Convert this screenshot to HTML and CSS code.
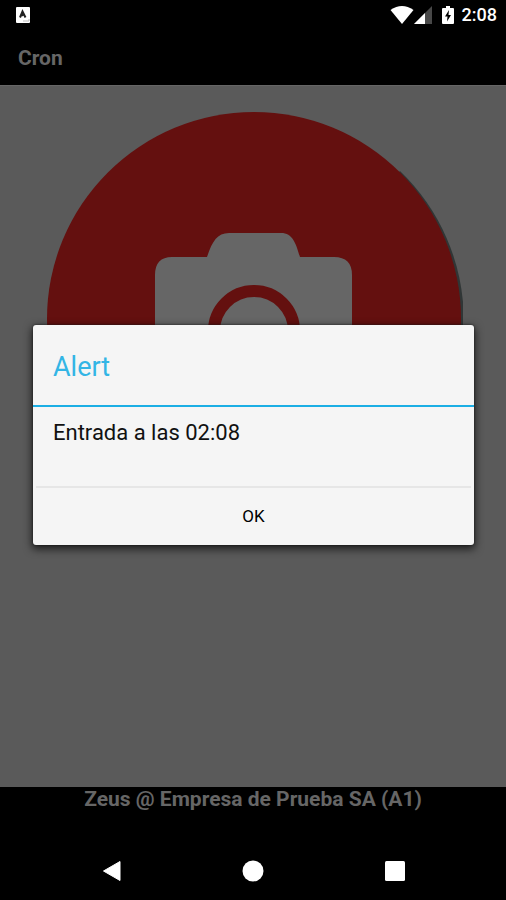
FILE: index.html
```html
<!DOCTYPE html>
<html lang="es">
<head>
<meta charset="utf-8">
<meta name="viewport" content="width=device-width, initial-scale=1">
<title>Cron</title>
<link rel="stylesheet" href="styles.css">
</head>
<body>
<div class="screen">
  <div class="status">
    <svg class="status-app" width="14" height="16" viewBox="0 0 14 16" aria-hidden="true">
      <rect width="14" height="16" rx="1" fill="#fff"/>
      <path d="M4 10.500L6.500 4.500L9.500 10.500M5.500 8.500L7.500 7.500" fill="none" stroke="#222" stroke-width="2"/>
      <path d="M7 14h6v-2" fill="none" stroke="#bbb"/>
    </svg>
    <div class="status-icons">
      <svg width="24" height="20" viewBox="0 0 24 20" aria-hidden="true">
        <path d="M0.500 5Q12 -3 23.500 5L12 19Z" fill="#fff"/>
      </svg>
      <svg width="18" height="20" viewBox="0 0 18 20" aria-hidden="true">
        <path d="M0 19L18 1V19Z" fill="#484848"/>
        <path d="M0 19L11 8V19Z" fill="#fff"/>
      </svg>
      <svg class="battery" width="12" height="20" viewBox="0 0 12 20" aria-hidden="true">
        <path d="M4 1h4v2h3q1 0 1 1v14q0 1-1 1H1q-1 0-1-1V4q0-1 1-1h3Z" fill="#fff"/>
        <path d="M7 5L3 11.500h2.500L5 16.500L9 10H6.500Z" fill="#000"/>
      </svg>
      <span class="clock">2:08</span>
    </div>
  </div>
  <header class="app-bar"><h1>Cron</h1></header>
  <main class="content">
    <button class="camera" type="button" aria-label="Cámara">
      <svg viewBox="0 0 416 416" aria-hidden="true">
        <path d="M353 59A208 208 0 0 1 357 355L208 208Z" fill="#303636"/>
        <circle cx="207" cy="207" r="207" fill="#64100f"/>
        <path d="M125 145H160C165 130 170 121 182 121H234C246 121 249 132 253 145H287Q305 145 305 163V275Q305 293 287 293H125Q108 293 108 275V163Q108 145 125 145Z" fill="#666"/>
        <circle cx="207" cy="219" r="40" fill="none" stroke="#64100f" stroke-width="12"/>
      </svg>
    </button>
  </main>
  <footer class="account">Zeus @ Empresa de Prueba SA (A1)</footer>
  <nav class="nav">
    <button type="button" aria-label="Atrás">
      <svg width="20" height="22" viewBox="0 0 20 22" aria-hidden="true"><path d="M18 1.500V20.500L1.500 11Z" fill="#fff" stroke="#fff" stroke-linejoin="round"/></svg>
    </button>
    <button type="button" aria-label="Inicio">
      <svg width="22" height="22" viewBox="0 0 22 22" aria-hidden="true"><circle cx="11" cy="11" r="10.500" fill="#fff"/></svg>
    </button>
    <button type="button" aria-label="Recientes">
      <svg width="20" height="20" viewBox="0 0 20 20" aria-hidden="true"><rect width="20" height="20" rx="1.500" fill="#fff"/></svg>
    </button>
  </nav>
  <div class="overlay">
    <section class="dialog" role="alertdialog" aria-modal="true" aria-labelledby="title" aria-describedby="message">
      <h2 id="title">Alert</h2>
      <p id="message">Entrada a las 02:08</p>
      <button class="ok" type="button">OK</button>
    </section>
  </div>
</div>
</body>
</html>
```
FILE: styles.css
```css
* {
  box-sizing: border-box;
}

body {
  margin: 0;
  background: #000;
  font-family: Roboto, "Liberation Sans", sans-serif;
}

h1, h2, p {
  margin: 0;
}

button {
  padding: 0;
  border: 0;
  background: none;
  font-family: inherit;
}

svg {
  display: block;
}

.screen {
  position: relative;
  display: flex;
  flex-direction: column;
  min-height: 100vh;
  background: #000;
}

.status {
  display: flex;
  align-items: center;
  justify-content: space-between;
  height: 30px;
  padding: 0 9px 0 16px;
}

.status-icons {
  display: flex;
  align-items: center;
}

.battery {
  margin: 0 8px 0 10px;
}

.clock {
  color: #fff;
  font-size: 18px;
  font-weight: 500;
  line-height: 32px;
}

.app-bar {
  height: 55px;
  padding: 0 18px;
}

.app-bar h1 {
  color: #666;
  font-size: 21px;
  font-weight: 700;
  line-height: 56px;
}

.content {
  flex: 1;
  padding: 26px 43px 0 47px;
  background: #5a5a5a;
  border-top: 1px solid #666;
  overflow: hidden;
}

.camera {
  display: block;
  width: 100%;
}

.account {
  height: 55px;
  color: #666;
  font-size: 21px;
  font-weight: 700;
  line-height: 24px;
  text-align: center;
}

.nav {
  display: grid;
  grid-template-columns: repeat(3, 28%);
  justify-content: center;
  height: 58px;
  padding-left: 1px;
}

.nav button {
  display: grid;
  place-items: center;
}

.overlay {
  position: absolute;
  inset: 28px 0 58px;
  display: flex;
  align-items: center;
  padding: 0 32px 0 33px;
}

.dialog {
  flex: 1;
  background: #f5f5f5;
  border-radius: 3px;
  box-shadow: 0 3px 8px 1px rgba(0, 0, 0, 0.7), 0 0 2px #222;
}

.dialog h2 {
  height: 82px;
  padding: 0 20px;
  color: #33b5e5;
  border-bottom: 2px solid #1caee4;
  font-size: 27px;
  font-weight: 400;
  line-height: 84px;
}

.dialog p {
  height: 79px;
  padding: 10px 20px;
  color: #111;
  font-size: 22px;
  line-height: 32px;
}

.ok {
  display: block;
  width: calc(100% - 6px);
  height: 59px;
  margin: 0 3px;
  color: #000;
  border-top: 2px solid #e6e6e6;
  font-size: 17px;
  line-height: 57px;
}
```
